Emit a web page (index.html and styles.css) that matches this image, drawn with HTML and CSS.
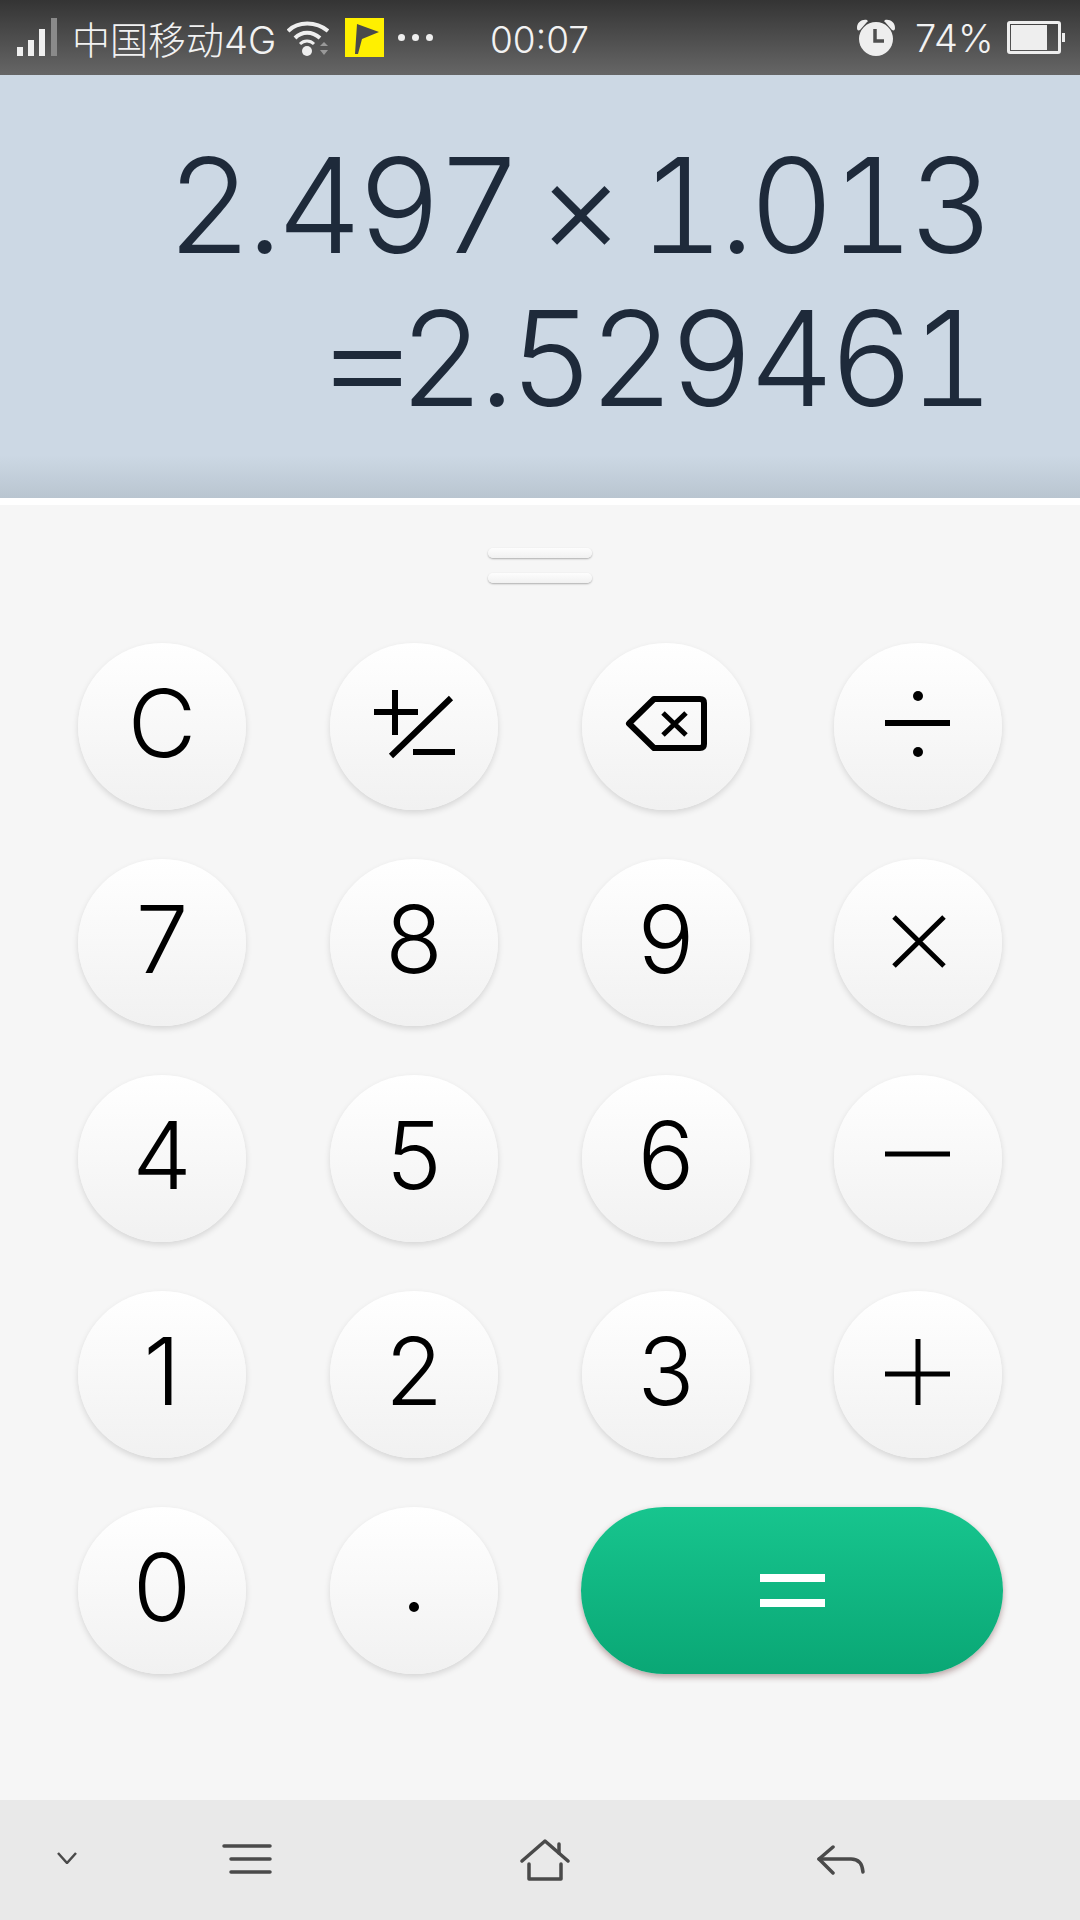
FILE: index.html
```html
<!DOCTYPE html>
<html lang="zh-CN">
<head>
    <meta charset="UTF-8" />
    <title>计算器</title>
    <link rel="stylesheet" href="styles.css">
</head>
<body>

<div class="statusbar">
    <svg class="signal" width="40" height="38" viewBox="0 0 40 38">
        <rect x="0" y="29" width="6" height="9" fill="#f0f0f0"/>
        <rect x="11" y="22" width="6" height="16" fill="#f0f0f0"/>
        <rect x="22" y="11" width="6" height="27" fill="#f0f0f0"/>
        <rect x="34" y="0" width="6" height="38" fill="#8a8a8a"/>
    </svg>
    <span class="carrier">中国移动4G</span>
    <svg class="wifi" width="42" height="36" viewBox="0 0 42 36" fill="none" stroke="#eee" stroke-width="4">
        <path d="M1 11 C11 1 29 1 41 11"/>
        <path d="M8 18 C15 11 25 11 33 18"/>
        <path d="M13 24 C17 20 23 20 27 24" stroke-width="3"/>
        <circle cx="20" cy="31" r="5" fill="#eee" stroke="none"/>
        <path d="M33 26 L37 22 L41 26 Z M33 30 L41 30 L37 35 Z" fill="#999" stroke="none"/>
    </svg>
    <span class="flag">
        <svg width="39" height="39" viewBox="0 0 39 39">
            <path d="M12 6 L34 14 L17 21 L13 36 L10 36 Z" fill="#4a4a4a"/>
        </svg>
    </span>
    <span class="dots"><i></i><i></i><i></i></span>
    <span class="clock">00:07</span>
    <svg class="alarm" width="40" height="37" viewBox="0 0 40 37">
        <path d="M1 9 C1 3 6 0 11 1 C12 2 12 3 11 3 L4 11 C2 12 1 11 1 9 Z" fill="#eee"/>
        <path d="M39 9 C39 3 34 0 29 1 C28 2 28 3 29 3 L36 11 C38 12 39 11 39 9 Z" fill="#eee"/>
        <circle cx="20" cy="20" r="17" fill="#eee"/>
        <path d="M19 10 V22 H28" fill="none" stroke="#4f4f4f" stroke-width="3.5"/>
    </svg>
    <span class="battery-text">74%</span>
    <div class="battery"><div class="battery-fill"></div></div>
    <div class="battery-nib"></div>
</div>

<div class="display">
    <div class="display-line">2.497 × 1.013</div>
    <div class="display-line"><span class="equals-sign">=</span>2.529461</div>
</div>

<div class="keypad">
    <div class="grip"></div>
    <div class="grip"></div>

    <div class="keys">
        <div class="key">C</div>
        <div class="key">
            <svg viewBox="0 0 168 168" fill="none" stroke="#000" stroke-width="6">
                <path d="M44 69 H88 M65 47 V92 M61 113 L121 55 M83 109 H125"/>
            </svg>
        </div>
        <div class="key">
            <svg viewBox="0 0 168 168" fill="none" stroke="#000" stroke-width="6">
                <path d="M72 56 H118 Q122 56 122 60 V101 Q122 105 118 105 H72 L47 80.5 Z" stroke-linejoin="round"/>
                <path d="M81 70 L104 92 M104 70 L81 92" stroke-width="5"/>
            </svg>
        </div>
        <div class="key">
            <svg viewBox="0 0 168 168" fill="#000">
                <rect x="51" y="77" width="65" height="6"/>
                <circle cx="84" cy="53" r="5"/>
                <circle cx="84" cy="109" r="5"/>
            </svg>
        </div>

        <div class="key">7</div>
        <div class="key">8</div>
        <div class="key">9</div>
        <div class="key">
            <svg viewBox="0 0 168 168" fill="none" stroke="#000" stroke-width="5">
                <path d="M60 58 L110 107 M110 58 L60 107"/>
            </svg>
        </div>

        <div class="key">4</div>
        <div class="key">5</div>
        <div class="key">6</div>
        <div class="key">
            <svg viewBox="0 0 168 168" fill="none" stroke="#000" stroke-width="5">
                <path d="M51 79 H116"/>
            </svg>
        </div>

        <div class="key">1</div>
        <div class="key">2</div>
        <div class="key">3</div>
        <div class="key">
            <svg viewBox="0 0 168 168" fill="none" stroke="#000" stroke-width="5">
                <path d="M51 83 H116 M84 48 V114"/>
            </svg>
        </div>

        <div class="key">0</div>
        <div class="key key-dot">.</div>
        <div class="key key-equals"><span class="bar"></span><span class="bar"></span></div>
    </div>
</div>

<div class="navbar">
    <svg class="nav-down" width="20" height="12" viewBox="0 0 20 12" fill="none" stroke="#4a4a4a" stroke-width="2.5">
        <path d="M1 1 L10 11 L19 1"/>
    </svg>
    <svg class="nav-menu" width="50" height="32" viewBox="0 0 50 32" fill="none" stroke="#4a4a4a" stroke-width="3.5" stroke-linecap="round">
        <path d="M2 3 H48 M9 16 H48 M9 29 H48"/>
    </svg>
    <svg class="nav-home" width="50" height="42" viewBox="0 0 50 42" fill="none" stroke="#4a4a4a" stroke-width="3.5" stroke-linecap="round" stroke-linejoin="round">
        <path d="M2 22 L25 2 L48 22"/>
        <path d="M39 5 V14"/>
        <path d="M9 25 V40 H41 V25"/>
    </svg>
    <svg class="nav-back" width="48" height="30" viewBox="0 0 48 30" fill="none" stroke="#4a4a4a" stroke-width="3.5" stroke-linecap="round" stroke-linejoin="round">
        <path d="M16 2 L2 14 L16 28"/>
        <path d="M2 14 H34 Q45 14 46 27"/>
    </svg>
</div>

</body>
</html>
```

FILE: styles.css
```css
* {
    box-sizing: border-box;
}
body {
    margin: 0;
    width: 1080px;
    height: 1920px;
    overflow: hidden;
    font-family: Inter, "Noto Sans CJK SC", sans-serif;
    background: #f6f6f6;
}

/* status bar */
.statusbar {
    height: 75px;
    display: flex;
    align-items: center;
    padding-left: 17px;
    background: linear-gradient(#343434, #666);
    color: #f2f2f2;
}
.signal {
    margin-top: -1px;
}
.carrier {
    margin-left: 15px;
    width: 203px;
    font-size: 38px;
    font-weight: 300;
    white-space: nowrap;
}
.wifi {
    margin-left: 12px;
}
.flag {
    margin-left: 16px;
    width: 39px;
    height: 39px;
    background: #fff000;
}
.flag svg {
    display: block;
}
.dots {
    margin-left: 14px;
    display: flex;
    gap: 7px;
    width: 37px;
}
.dots i {
    width: 7px;
    height: 7px;
    border-radius: 50%;
    background: #eee;
}
.clock {
    margin-left: 55px;
    margin-top: 4px;
    width: 98px;
    font-size: 37px;
    font-weight: 300;
    white-space: nowrap;
}
.alarm {
    margin-left: 268px;
}
.battery-text {
    margin-left: 19px;
    width: 75px;
    font-size: 38px;
    font-weight: 300;
    white-space: nowrap;
}
.battery {
    margin-left: 17px;
    width: 54px;
    height: 33px;
    padding: 1px;
    border: 3px solid #eee;
    border-radius: 3px;
}
.battery-fill {
    width: 36px;
    height: 100%;
    background: #eee;
}
.battery-nib {
    margin-left: 1px;
    width: 3px;
    height: 9px;
    background: #eee;
}

/* result area */
.display {
    height: 423px;
    padding: 54px 91px 0 0;
    text-align: right;
    color: #1e2a3a;
    background: linear-gradient(#ccd8e4 90%, #b9c5d0);
}
.display-line {
    font-size: 132px;
    font-weight: 300;
    font-variant-numeric: tabular-nums;
    letter-spacing: -5.4px;
    word-spacing: -9px;
    line-height: 153px;
    white-space: nowrap;
}
.equals-sign {
    display: inline-block;
    letter-spacing: -17px;
    transform: scaleX(1.25);
    transform-origin: right;
}

/* keypad */
.keypad {
    height: 1302px;
    padding-top: 43px;
    border-top: 7px solid #fff;
    background: #f6f6f6;
}
.grip {
    width: 104px;
    height: 10px;
    margin: 0 auto 15px 488px;
    border-radius: 5px;
    background: linear-gradient(#fdfdfd, #f1f1f1);
    box-shadow: 0 1px 2px rgba(0, 0, 0, 0.3);
}
.keys {
    display: grid;
    grid-template-columns: repeat(4, 168px);
    grid-auto-rows: 167px;
    column-gap: 84px;
    row-gap: 49px;
    margin-top: 60px;
    padding-left: 78px;
}
.key {
    display: flex;
    align-items: center;
    justify-content: center;
    padding-bottom: 8px;
    border-radius: 50%;
    font-size: 94px;
    font-weight: 300;
    color: #000;
    background: linear-gradient(#fff, #f1f1f1);
    box-shadow: 0 3px 6px rgba(0, 0, 0, 0.13);
}
.key svg {
    display: block;
    flex: none;
    width: 168px;
    height: 168px;
    margin-bottom: -8px;
}
.key-dot {
    padding-bottom: 28px;
}
.key-equals {
    grid-column: span 2;
    flex-direction: column;
    gap: 17px;
    margin: 0 -1px;
    padding-bottom: 0;
    border-radius: 84px;
    background: linear-gradient(#17c58e, #0aa775);
    box-shadow: 0 3px 6px rgba(90, 40, 40, 0.4);
}
.bar {
    width: 65px;
    height: 8px;
    background: #fff;
}

/* bottom navigation */
.navbar {
    height: 120px;
    display: flex;
    align-items: center;
    padding-left: 57px;
    background: #e9e9e9;
}
.nav-down {
    margin-top: -4px;
}
.nav-menu {
    margin-left: 145px;
    margin-top: -3px;
}
.nav-home {
    margin-left: 248px;
    margin-top: -1px;
}
.nav-back {
    margin-left: 247px;
}
```
